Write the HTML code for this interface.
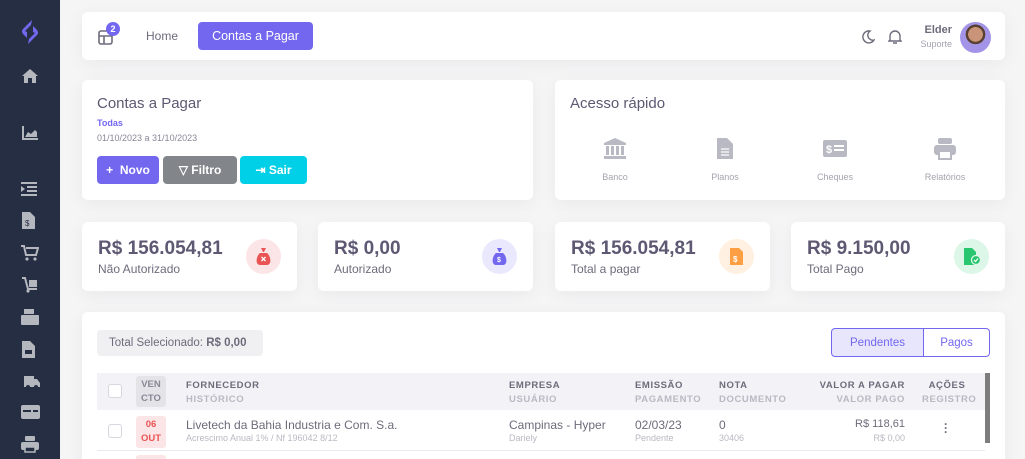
<!DOCTYPE html>
<html><head><meta charset="utf-8">
<style>
*{box-sizing:border-box;margin:0;padding:0}
html,body{width:1025px;height:459px;overflow:hidden}
body{background:#f5f5f6;font-family:"Liberation Sans",sans-serif;color:#5e5873;position:relative}
.sb{position:absolute;left:0;top:0;width:60px;height:459px;background:#262e43}
.sb svg{position:absolute;left:21px}
.card{position:absolute;background:#fff;border-radius:6px;box-shadow:0 4px 18px rgba(0,0,0,.05)}
.btn{position:absolute;height:28px;border-radius:4px;color:#fff;font-size:12px;font-weight:bold;line-height:28px;text-align:center}
.stat .v{position:absolute;left:16px;top:16px;font-size:19px;font-weight:bold;color:#5e5873}
.stat .l{position:absolute;left:16px;top:40px;font-size:12px;color:#6e6b7b}
.stat .ic{position:absolute;right:16px;top:17px;width:35px;height:35px;border-radius:50%}
.qa{position:absolute;top:92px;width:80px;text-align:center;font-size:9px;color:#a5a3ae}
.th{position:absolute;font-size:9.5px;font-weight:bold;letter-spacing:.6px;color:#6e6b7b}
.th span{display:block;color:#b9b9c3;margin-top:3px}
</style></head><body>
<div class="sb">
<svg style="left:19px;top:19px" width="22" height="26" viewBox="0 0 22 26"><path d="M13 1 L4 10 Q2 12 4 15 L8 19 L8 13 L6 12 L12 6Z M9 25 L18 16 Q20 14 18 11 L14 7 L14 13 L16 14 L10 20Z" fill="#7367f0"/></svg>
<svg style="top:68px" width="18" height="16" viewBox="0 0 18 16"><path d="M9 1 L1 8 H3 V15 H7 V10 H11 V15 H15 V8 H17Z" fill="#b4b7bd"/></svg>
<svg style="top:126px" width="18" height="15" viewBox="0 0 18 15"><path d="M1 0V14H17V12H3V0Z M4 11 L7 6 L10 8 L14 4 L16 6 V11Z" fill="#b4b7bd"/></svg>
<svg style="top:182px" width="16" height="14"><path d="M0 0h16v2H0zM6 4h10v2H6zM6 8h10v2H6zM0 12h16v2H0zM0 4l4 3-4 3z" fill="#b4b7bd"/></svg>
<svg style="top:212px;left:22px" width="13" height="17"><path d="M0 0h8l5 5v12H0z" fill="#b4b7bd"/><text x="3" y="14" font-size="8" fill="#262e43" font-family="Liberation Sans">$</text></svg>
<svg style="top:245px" width="18" height="16"><path d="M0 1h3l2 9h10l2-7H5" stroke="#b4b7bd" stroke-width="2" fill="none"/><circle cx="6" cy="14" r="1.6" fill="#b4b7bd"/><circle cx="14" cy="14" r="1.6" fill="#b4b7bd"/></svg>
<svg style="top:277px" width="18" height="16"><path d="M1 1h3l3 11h9" stroke="#b4b7bd" stroke-width="2" fill="none"/><rect x="8" y="3" width="8" height="7" fill="#b4b7bd"/><circle cx="7" cy="14" r="1.6" fill="#b4b7bd"/></svg>
<svg style="top:309px" width="18" height="16"><rect x="3" y="0" width="10" height="5" fill="#b4b7bd"/><rect x="0" y="6" width="18" height="10" rx="1" fill="#b4b7bd"/></svg>
<svg style="top:341px;left:22px" width="13" height="17"><path d="M0 0h8l5 5v12H0z" fill="#b4b7bd"/><rect x="3" y="9" width="7" height="4" fill="#262e43"/></svg>
<svg style="top:374px" width="20" height="15"><path d="M3 2h10v3h3l3 4v4H3z" fill="#b4b7bd"/><circle cx="7" cy="13" r="2" fill="#262e43"/><circle cx="15" cy="13" r="2" fill="#262e43"/></svg>
<svg style="top:405px" width="19" height="14"><rect width="19" height="14" rx="2" fill="#b4b7bd"/><rect x="2" y="5" width="8" height="2" fill="#262e43"/><rect x="12" y="5" width="5" height="2" fill="#262e43"/></svg>
<svg style="top:436px" width="18" height="18"><rect x="4" y="0" width="10" height="5" rx="1" fill="#b4b7bd"/><rect x="0" y="6" width="18" height="8" rx="2" fill="#b4b7bd"/><rect x="4" y="11" width="10" height="5" fill="#262e43" stroke="#b4b7bd" stroke-width="1.5"/></svg>
</div>

<div class="card" style="left:82px;top:12px;width:923px;height:48px">
<svg style="position:absolute;left:16px;top:18px" width="15" height="15"><rect x="1" y="1" width="13" height="13" rx="2" fill="none" stroke="#6e6b7b" stroke-width="1.6"/><path d="M1 6h13M6 6v8" stroke="#6e6b7b" stroke-width="1.6"/></svg>
<div style="position:absolute;left:24px;top:10px;width:14px;height:14px;border-radius:50%;background:#7367f0;color:#fff;font-size:9px;font-weight:bold;text-align:center;line-height:14px">2</div>
<div style="position:absolute;left:64px;top:17px;font-size:12px;color:#6e6b7b">Home</div>
<div class="btn" style="left:116px;top:10px;width:115px;background:#7367f0;font-weight:normal;font-size:12.5px">Contas a Pagar</div>
<svg style="position:absolute;left:779px;top:18px" width="14" height="14"><path d="M9 1A6 6 0 1 0 13 10 5 5 0 0 1 9 1z" fill="none" stroke="#6e6b7b" stroke-width="1.4"/></svg>
<svg style="position:absolute;left:806px;top:17px" width="14" height="16"><path d="M2 11V7a5 5 0 0 1 10 0v4l1 1H1z M5 14h4" fill="none" stroke="#6e6b7b" stroke-width="1.4"/></svg>
<div style="position:absolute;right:53px;top:12px;font-size:11px;font-weight:bold;color:#6e6b7b">Elder</div>
<div style="position:absolute;right:53px;top:27px;font-size:9px;color:#a5a3ae">Suporte</div>
<div style="position:absolute;left:878px;top:10px;width:31px;height:31px;border-radius:50%;background:radial-gradient(circle at 50% 40%,#c99477 0 30%,#5a4030 31% 40%,#a394e8 41%)"></div>
</div>

<div class="card" style="left:82px;top:80px;width:451px;height:120px">
<div style="position:absolute;left:15px;top:15px;font-size:15px;color:#5e5873">Contas a Pagar</div>
<div style="position:absolute;left:15px;top:38px;font-size:9px;font-weight:bold;color:#7367f0">Todas</div>
<div style="position:absolute;left:15px;top:53px;font-size:9px;color:#8a8796">01/10/2023 a 31/10/2023</div>
<div class="btn" style="left:15px;top:76px;width:62px;background:#7367f0">+&nbsp; Novo</div>
<div class="btn" style="left:81px;top:76px;width:74px;background:#82868b">▽ Filtro</div>
<div class="btn" style="left:158px;top:76px;width:67px;background:#00cfe8">⇥ Sair</div>
</div>

<div class="card" style="left:555px;top:80px;width:450px;height:120px">
<div style="position:absolute;left:15px;top:15px;font-size:15px;color:#5e5873">Acesso rápido</div>
<svg style="position:absolute;left:49px;top:58px" width="22" height="22"><path d="M11 0L0 5v2h22V5z M2 8h3v9H2zM7 8h3v9H7zM12 8h3v9h-3zM17 8h3v9h-3zM0 18h22v3H0z" fill="#b9b9c3"/></svg>
<svg style="position:absolute;left:162px;top:58px" width="16" height="21"><path d="M0 0h10l6 6v15H0z" fill="#b9b9c3"/><path d="M4 11h8M4 14h8M4 17h8" stroke="#fff" stroke-width="1.2"/></svg>
<svg style="position:absolute;left:268px;top:60px" width="24" height="17"><rect width="24" height="17" rx="2" fill="#b9b9c3"/><text x="3" y="13" font-size="11" font-weight="bold" fill="#fff" font-family="Liberation Sans">$</text><path d="M11 6h10M11 10h10" stroke="#fff" stroke-width="2"/></svg>
<svg style="position:absolute;left:379px;top:58px" width="22" height="22"><rect x="4" y="0" width="14" height="6" rx="2" fill="#b9b9c3"/><rect x="0" y="7" width="22" height="10" rx="3" fill="#b9b9c3"/><rect x="5" y="13" width="12" height="8" fill="#fff" stroke="#b9b9c3" stroke-width="2"/></svg>
<div class="qa" style="left:20px">Banco</div>
<div class="qa" style="left:130px">Planos</div>
<div class="qa" style="left:240px">Cheques</div>
<div class="qa" style="left:350px">Relatórios</div>
</div>

<div class="card stat" style="left:82px;top:222px;width:215px;height:69px"><div class="v">R$ 156.054,81</div><div class="l">Não Autorizado</div><div class="ic" style="background:#fce5e6"><svg style="margin:9px 10px" width="15" height="17"><path d="M5 0h5l-2 4h-1z M4 5h7c4 3 5 12 0 12H4c-5 0-4-9 0-12z" fill="#ea5455"/><path d="M5.5 9l4 4M9.5 9l-4 4" stroke="#fff" stroke-width="1.3"/></svg></div></div>
<div class="card stat" style="left:318px;top:222px;width:215px;height:69px"><div class="v">R$ 0,00</div><div class="l">Autorizado</div><div class="ic" style="background:#eae8fd"><svg style="margin:9px 10px" width="15" height="17"><path d="M5 0h5l-2 4h-1z M4 5h7c4 3 5 12 0 12H4c-5 0-4-9 0-12z" fill="#7367f0"/><text x="5" y="14" font-size="7" font-weight="bold" fill="#fff" font-family="Liberation Sans">$</text></svg></div></div>
<div class="card stat" style="left:555px;top:222px;width:215px;height:69px"><div class="v">R$ 156.054,81</div><div class="l">Total a pagar</div><div class="ic" style="background:#fff0e1"><svg style="margin:9px 11px" width="13" height="17"><path d="M0 0h9l4 4v13H0z" fill="#ff9f43"/><text x="3" y="14" font-size="8" font-weight="bold" fill="#fff" font-family="Liberation Sans">$</text></svg></div></div>
<div class="card stat" style="left:791px;top:222px;width:214px;height:69px"><div class="v">R$ 9.150,00</div><div class="l">Total Pago</div><div class="ic" style="background:#dcf6e8"><svg style="margin:9px 10px" width="17" height="17"><path d="M0 0h8l4 4v13H0z" fill="#28c76f"/><circle cx="12" cy="12" r="4.5" fill="#28c76f" stroke="#dcf6e8" stroke-width="1.3"/><path d="M10 12l1.5 1.5 2.5-3" stroke="#fff" stroke-width="1.2" fill="none"/></svg></div></div>

<div class="card" style="left:82px;top:312px;width:923px;height:160px;overflow:hidden">
<div style="position:absolute;left:15px;top:18px;width:166px;height:26px;border-radius:4px;background:#f0f0f2;font-size:11.5px;color:#6e6b7b;line-height:26px;padding-left:12px">Total Selecionado: <b>R$ 0,00</b></div>
<div style="position:absolute;left:749px;top:16px;width:93px;height:29px;border:1px solid #7367f0;border-radius:4px 0 0 4px;background:#e8e6fc;color:#7367f0;font-size:11.5px;text-align:center;line-height:29px">Pendentes</div>
<div style="position:absolute;left:841px;top:16px;width:67px;height:29px;border:1px solid #7367f0;border-radius:0 4px 4px 0;color:#7367f0;font-size:11.5px;text-align:center;line-height:29px">Pagos</div>
<div style="position:absolute;left:15px;top:61px;width:890px;height:37px;background:#f3f2f7"></div>
<div style="position:absolute;left:903px;top:61px;width:5px;height:70px;background:#7d7d7d"></div>
<div style="position:absolute;left:26px;top:72px;width:14px;height:14px;border:1px solid #d8d6de;border-radius:3px;background:#fff"></div>
<div style="position:absolute;left:54px;top:64px;width:30px;height:31px;background:#e3e3e8;border-radius:3px;font-size:9.5px;font-weight:bold;color:#8a8796;text-align:center;line-height:14px;padding-top:2px">VEN<br>CTO</div>
<div class="th" style="left:104px;top:68px">FORNECEDOR<span>HISTÓRICO</span></div>
<div class="th" style="left:427px;top:68px">EMPRESA<span>USUÁRIO</span></div>
<div class="th" style="left:553px;top:68px">EMISSÃO<span>PAGAMENTO</span></div>
<div class="th" style="left:637px;top:68px">NOTA<span>DOCUMENTO</span></div>
<div class="th" style="left:725px;top:68px;text-align:right;width:98px">VALOR A PAGAR<span>VALOR PAGO</span></div>
<div class="th" style="left:840px;top:68px;text-align:center;width:50px">AÇÕES<span>REGISTRO</span></div>
<div style="position:absolute;left:26px;top:112px;width:14px;height:14px;border:1px solid #d8d6de;border-radius:3px"></div>
<div style="position:absolute;left:54px;top:104px;width:30px;height:32px;background:#fce5e6;border-radius:3px;font-size:9.5px;font-weight:bold;color:#ea5455;text-align:center;line-height:14px;padding-top:2px">06<br>OUT</div>
<div style="position:absolute;left:104px;top:106px;font-size:12px;color:#6e6b7b">Livetech da Bahia Industria e Com. S.a.</div>
<div style="position:absolute;left:104px;top:121px;font-size:9px;color:#b9b9c3">Acrescimo Anual 1% / Nf 196042 8/12</div>
<div style="position:absolute;left:427px;top:106px;font-size:12px;color:#6e6b7b">Campinas - Hyper</div>
<div style="position:absolute;left:427px;top:121px;font-size:9px;color:#b9b9c3">Dariely</div>
<div style="position:absolute;left:553px;top:106px;font-size:12px;color:#6e6b7b">02/03/23</div>
<div style="position:absolute;left:553px;top:121px;font-size:9px;color:#b9b9c3">Pendente</div>
<div style="position:absolute;left:637px;top:106px;font-size:12px;color:#6e6b7b">0</div>
<div style="position:absolute;left:637px;top:121px;font-size:9px;color:#b9b9c3">30406</div>
<div style="position:absolute;left:723px;top:106px;width:100px;text-align:right;font-size:11px;color:#6e6b7b">R$ 118,61</div>
<div style="position:absolute;left:723px;top:121px;width:100px;text-align:right;font-size:9px;color:#b9b9c3">R$ 0,00</div>
<div style="position:absolute;left:862px;top:110px;font-size:12px;font-weight:bold;color:#6e6b7b;line-height:4px">·<br>·<br>·</div>
<div style="position:absolute;left:15px;top:138px;width:888px;height:1px;background:#ebe9f1"></div>
<div style="position:absolute;left:54px;top:143px;width:30px;height:20px;background:#fce5e6;border-radius:3px"></div>
</div>
</body></html>
